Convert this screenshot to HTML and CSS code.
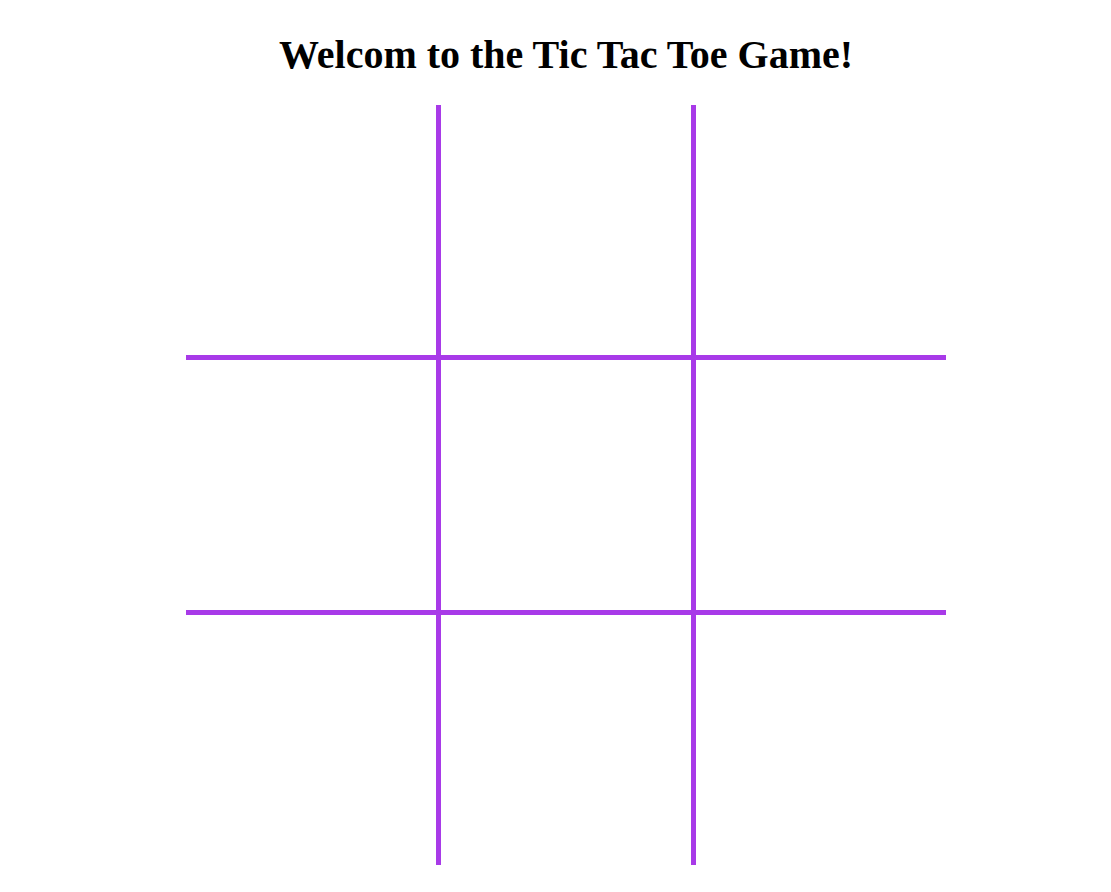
FILE: index.html
```html
<!DOCTYPE html>
<html>
<head>
<meta charset="utf-8">
<link rel="stylesheet" href="styles.css">
</head>
<body>
<div class="page">
  <h1 class="title">Welcom to the Tic Tac Toe Game!</h1>
  <div class="board">
    <div class="cell c1"></div>
    <div class="cell c2"></div>
    <div class="cell c3"></div>
    <div class="cell c4"></div>
    <div class="cell c5"></div>
    <div class="cell c6"></div>
    <div class="cell c7"></div>
    <div class="cell c8"></div>
    <div class="cell c9"></div>
  </div>
</div>
</body>
</html>
```
FILE: styles.css
```css
html, body {
  margin: 0;
  padding: 0;
  background: #ffffff;
  overflow: hidden;
}
.page {
  display: flex;
  flex-direction: column;
  align-items: center;
  padding-left: 21px;
  padding-top: 32px;
}
.title {
  font-family: "Liberation Serif", "Times New Roman", serif;
  font-weight: bold;
  font-size: 40px;
  line-height: 46px;
  margin: 0 0 27px 0;
  color: #000;
}
.board {
  display: grid;
  grid-template-columns: 255px 255px 250px;
  grid-template-rows: 255px 255px 250px;
}
.cell {
  border: 0 solid #a83ae8;
}
.c1, .c2, .c4, .c5, .c7, .c8 { border-right-width: 5px; }
.c1, .c2, .c3, .c4, .c5, .c6 { border-bottom-width: 5px; }
```
